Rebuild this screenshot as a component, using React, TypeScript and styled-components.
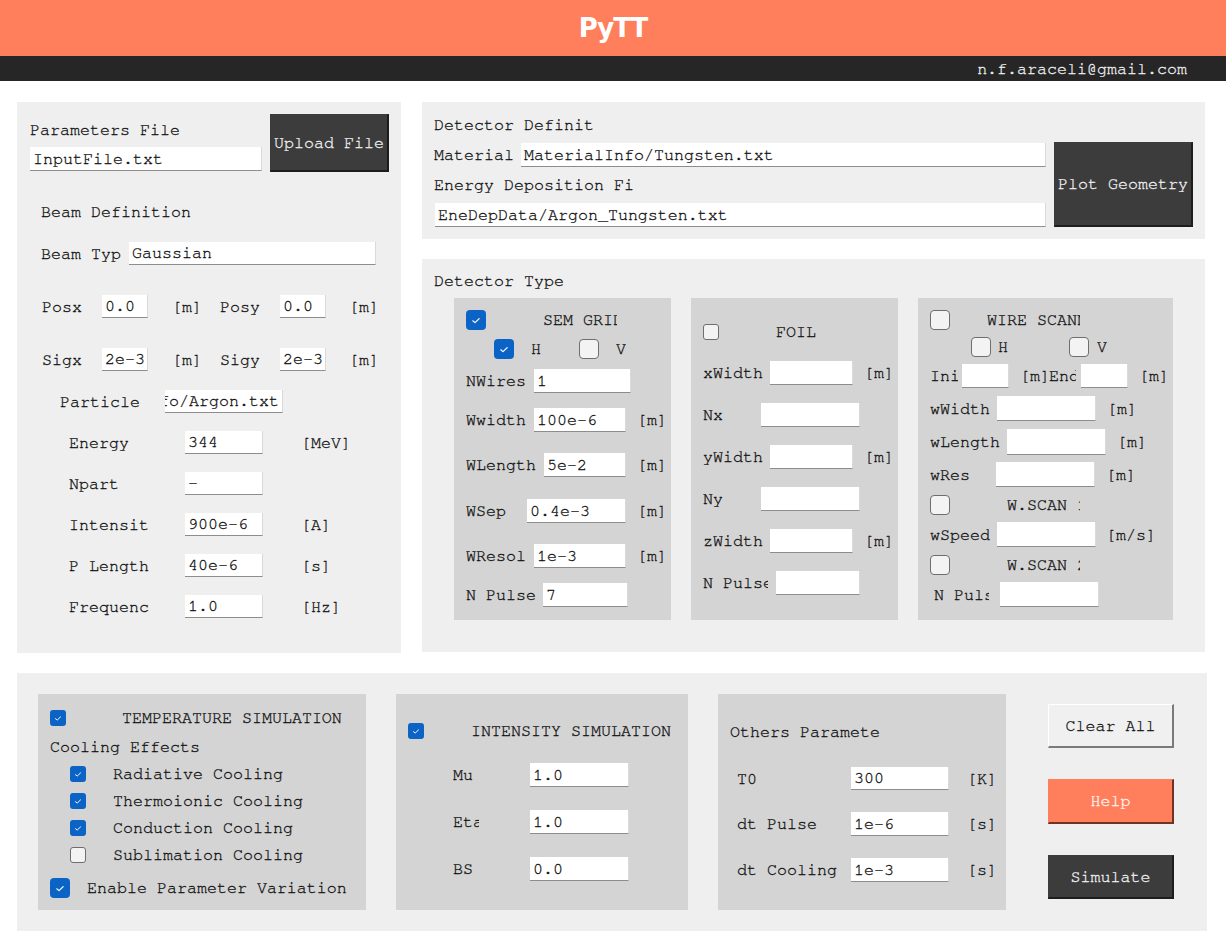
import React from "react";
import styled, { createGlobalStyle } from "styled-components";

const MONO = `"Nimbus Mono PS", "Nimbus Mono L", "FreeMono", "Courier 10 Pitch", "Liberation Mono", "Courier New", monospace`;

const GlobalStyle = createGlobalStyle`
  html, body { margin: 0; padding: 0; background: #ffffff; }
  body {
    font-family: ${MONO};
    font-size: 16.67px;
    color: #111111;
    -webkit-text-stroke: 0.3px currentColor;
  }
  * { box-sizing: border-box; }
`;

const Header = styled.header`
  height: 56px;
  background: #ff7f5c;
  display: flex;
  align-items: center;
  justify-content: center;
`;

const Title = styled.h1`
  margin: 0;
  font-family: "DejaVu Sans", "Liberation Sans", sans-serif;
  font-weight: bold;
  font-size: 26px;
  letter-spacing: -1px;
  color: #ffffff;
  line-height: 1;
  -webkit-text-stroke: 0;
`;

const SubBar = styled.div`
  height: 25px;
  background: #262626;
  display: flex;
  align-items: center;
  justify-content: flex-end;
  padding-right: 39px;
  color: #f0f0f0;
`;

const Main = styled.main`
  padding: 21px 0 19px 17px;
`;

const TopArea = styled.div`
  display: flex;
  gap: 21px;
  align-items: flex-start;
`;

const Panel = styled.section<{ $w: number; $h: number; $pt?: number; $pl?: number }>`
  width: ${(p) => p.$w}px;
  height: ${(p) => p.$h}px;
  background: #efefef;
  padding-top: ${(p) => p.$pt ?? 0}px;
  padding-left: ${(p) => p.$pl ?? 0}px;
  display: flex;
  flex-direction: column;
`;

const RightCol = styled.div`
  width: 783px;
  display: flex;
  flex-direction: column;
  gap: 20px;
`;

const Row = styled.div<{ $mt?: number; $h?: number; $pl?: number; $top?: boolean }>`
  display: flex;
  align-items: ${(p) => (p.$top ? "flex-start" : "center")};
  flex: none;
  margin-top: ${(p) => p.$mt ?? 0}px;
  height: ${(p) => p.$h ?? 24}px;
  padding-left: ${(p) => p.$pl ?? 0}px;
`;

const Text = styled.span<{ $w?: number; $ml?: number; $mt?: number }>`
  display: inline-block;
  flex: none;
  white-space: nowrap;
  overflow: hidden;
  line-height: 20px;
  ${(p) => (p.$w !== undefined ? `width: ${p.$w}px;` : "")}
  margin-left: ${(p) => p.$ml ?? 0}px;
  margin-top: ${(p) => p.$mt ?? 0}px;
`;

const Field = styled.div<{ $w: number; $h?: number; $ml?: number; $mt?: number; $end?: boolean }>`
  flex: none;
  width: ${(p) => p.$w}px;
  height: ${(p) => p.$h ?? 24}px;
  margin-left: ${(p) => p.$ml ?? 0}px;
  margin-top: ${(p) => p.$mt ?? 0}px;
  background: #ffffff;
  border-bottom: 1px solid #8d8d8d;
  border-right: 1px solid #d9d9d9;
  padding: 0 3px;
  display: flex;
  align-items: center;
  justify-content: ${(p) => (p.$end ? "flex-end" : "flex-start")};
  overflow: hidden;
  white-space: nowrap;
  color: #111111;
`;

const Column = styled.div<{ $w: number }>`
  width: ${(p) => p.$w}px;
  display: flex;
  flex-direction: column;
  flex: none;
`;

const Button = styled.button<{ $variant: "dark" | "light" | "accent"; $w: number; $h: number; $ml?: number; $mt?: number }>`
  flex: none;
  width: ${(p) => p.$w}px;
  height: ${(p) => p.$h}px;
  margin-left: ${(p) => p.$ml ?? 0}px;
  margin-top: ${(p) => p.$mt ?? 0}px;
  padding: 0;
  font-family: ${MONO};
  font-size: 16.67px;
  -webkit-text-stroke: 0.3px currentColor;
  white-space: nowrap;
  cursor: pointer;
  border-style: solid;
  border-width: 1px 2px 2px 1px;
  ${(p) =>
    p.$variant === "dark"
      ? `background: #3c3c3c; color: #f2f2f2; border-color: #3c3c3c #1d1d1d #1d1d1d #3c3c3c;`
      : p.$variant === "accent"
      ? `background: #ff7f5c; color: #fff6f0; border-color: #ff7f5c #6e3322 #6e3322 #ff7f5c;`
      : `background: #f0f0f0; color: #111111; border-color: #ffffff #7a7a7a #7a7a7a #ffffff;`}
`;

const BoxRow = styled.div<{ $mt?: number; $ml?: number; $gap: number }>`
  display: flex;
  gap: ${(p) => p.$gap}px;
  margin-top: ${(p) => p.$mt ?? 0}px;
  margin-left: ${(p) => p.$ml ?? 0}px;
`;

const Box = styled.div<{ $w: number; $h: number }>`
  width: ${(p) => p.$w}px;
  height: ${(p) => p.$h}px;
  background: #d4d4d4;
  display: flex;
  flex-direction: column;
  flex: none;
  overflow: hidden;
`;

const CheckBox = styled.span<{ $on?: boolean; $size: number; $ml?: number }>`
  flex: none;
  width: ${(p) => p.$size}px;
  height: ${(p) => p.$size}px;
  margin-left: ${(p) => p.$ml ?? 0}px;
  border-radius: ${(p) => (p.$size > 17 ? 4 : 3)}px;
  background: ${(p) => (p.$on ? "#0b63c5" : "#f3f3f3")};
  border: ${(p) => (p.$on ? "none" : "1px solid #6e6e6e")};
  display: flex;
  align-items: center;
  justify-content: center;
`;

const Check: React.FC<{ on?: boolean; size?: number; ml?: number }> = ({ on, size = 20, ml }) => (
  <CheckBox $on={on} $size={size} $ml={ml}>
    {on && (
      <svg width={size * 0.5} height={size * 0.5} viewBox="0 0 10 10">
        <polyline points="1.8,5.8 4,7.6 8.2,3.6" fill="none" stroke="#ffffff" strokeWidth="1.2" strokeLinecap="round" strokeLinejoin="round" />
      </svg>
    )}
  </CheckBox>
);

const BottomPanel = styled.section`
  width: 1190px;
  height: 258px;
  margin-top: 20px;
  background: #efefef;
  padding: 21px;
  display: flex;
  align-items: flex-start;
`;

const ButtonCol = styled.div<{ $ml: number }>`
  display: flex;
  flex-direction: column;
  margin-left: ${(p) => p.$ml}px;
`;

const LeftPanel = () => (
  <Panel $w={384} $h={551}>
    <Row $mt={12} $h={58} $pl={13} $top>
      <Column $w={232}>
        <Text $mt={6}>Parameters File</Text>
        <Field $w={232} $mt={7}>InputFile.txt</Field>
      </Column>
      <Button $variant="dark" $w={119} $h={58} $ml={8}>Upload File</Button>
    </Row>
    <Row $mt={30} $h={20} $pl={24}>
      <Text>Beam Definition</Text>
    </Row>
    <Row $mt={20} $h={23} $pl={24}>
      <Text $w={88}>Beam Typ</Text>
      <Field $w={247} $h={23}>Gaussian</Field>
    </Row>
    <Row $mt={30} $h={23} $pl={25}>
      <Text $w={60}>Posx</Text>
      <Field $w={46} $h={23}>0.0</Field>
      <Text $ml={24} $w={48}>[m]</Text>
      <Text $w={60}>Posy</Text>
      <Field $w={46} $h={23}>0.0</Field>
      <Text $ml={23}>[m]</Text>
    </Row>
    <Row $mt={30} $h={23} $pl={25}>
      <Text $w={60}>Sigx</Text>
      <Field $w={46} $h={23}>2e-3</Field>
      <Text $ml={24} $w={48}>[m]</Text>
      <Text $w={60}>Sigy</Text>
      <Field $w={46} $h={23}>2e-3</Field>
      <Text $ml={23}>[m]</Text>
    </Row>
    <Row $mt={19} $h={23} $pl={43}>
      <Text $w={105}>Particle</Text>
      <Field $w={118} $h={23} $end>ParticleInfo/Argon.txt</Field>
    </Row>
    {[
      ["Energy", "344", "[MeV]"],
      ["Npart", "-", ""],
      ["Intensit", "900e-6", "[A]"],
      ["P Length", "40e-6", "[s]"],
      ["Frequenc", "1.0", "[Hz]"],
    ].map(([l, v, u]) => (
      <Row key={l} $mt={18} $h={23} $pl={52}>
        <Text $w={116}>{l}</Text>
        <Field $w={78} $h={23}>{v}</Field>
        {u && <Text $ml={38}>{u}</Text>}
      </Row>
    ))}
  </Panel>
);

const DetectorDefinition = () => (
  <Panel $w={783} $h={137} $pt={13} $pl={12}>
    <Row $h={20}>
      <Text>Detector Definit</Text>
    </Row>
    <Row $mt={7} $h={85} $top>
      <Column $w={612}>
        <Row $mt={1} $h={24}>
          <Text $w={87}>Material</Text>
          <Field $w={525}>MaterialInfo/Tungsten.txt</Field>
        </Row>
        <Row $mt={8} $h={20}>
          <Text>Energy Deposition Fi</Text>
        </Row>
        <Row $mt={8} $h={24}>
          <Field $w={611} $ml={1}>EneDepData/Argon_Tungsten.txt</Field>
        </Row>
      </Column>
      <Button $variant="dark" $w={139} $h={85} $ml={8}>Plot Geometry</Button>
    </Row>
  </Panel>
);

const SemGrid = () => (
  <Box $w={217} $h={322}>
    <Row $mt={12} $h={20} $pl={12}>
      <Check on />
      <Text $ml={57} $w={74}>SEM GRID</Text>
    </Row>
    <Row $mt={9} $h={20} $pl={40}>
      <Check on />
      <Text $ml={17} $w={48}>H</Text>
      <Check />
      <Text $ml={17}>V</Text>
    </Row>
    <Row $mt={10} $pl={12}>
      <Text $w={68}>NWires</Text>
      <Field $w={97}>1</Field>
    </Row>
    <Row $mt={15} $pl={12}>
      <Text $w={68}>Wwidth</Text>
      <Field $w={92}>100e-6</Field>
      <Text $ml={11}>[m]</Text>
    </Row>
    <Row $mt={21} $pl={12}>
      <Text $w={78}>WLength</Text>
      <Field $w={82}>5e-2</Field>
      <Text $ml={11}>[m]</Text>
    </Row>
    <Row $mt={22} $pl={12}>
      <Text $w={61}>WSep</Text>
      <Field $w={99}>0.4e-3</Field>
      <Text $ml={11}>[m]</Text>
    </Row>
    <Row $mt={21} $pl={12}>
      <Text $w={68}>WResol</Text>
      <Field $w={92}>1e-3</Field>
      <Text $ml={11}>[m]</Text>
    </Row>
    <Row $mt={15} $pl={12}>
      <Text $w={77}>N Pulse</Text>
      <Field $w={85}>7</Field>
    </Row>
  </Box>
);

const Foil = () => (
  <Box $w={207} $h={322}>
    <Row $mt={26} $h={16} $pl={12}>
      <Check size={16} />
      <Text $ml={57}>FOIL</Text>
    </Row>
    {[
      ["xWidth", true],
      ["Nx", false],
      ["yWidth", true],
      ["Ny", false],
      ["zWidth", true],
    ].map(([l, unit], i) => (
      <Row key={l as string} $mt={i === 0 ? 21 : 18} $pl={12}>
        <Text $w={unit ? 67 : 58}>{l as string}</Text>
        <Field $w={unit ? 83 : 99}></Field>
        {unit && <Text $ml={11}>[m]</Text>}
      </Row>
    ))}
    <Row $mt={18} $pl={12}>
      <Text $w={65}>N Pulse</Text>
      <Field $w={84} $ml={8}></Field>
    </Row>
  </Box>
);

const WireScan = () => (
  <Box $w={255} $h={322}>
    <Row $mt={12} $h={20} $pl={12}>
      <Check />
      <Text $ml={37} $w={93}>WIRE SCANNER</Text>
    </Row>
    <Row $mt={7} $h={20} $pl={53}>
      <Check />
      <Text $ml={7} $w={71}>H</Text>
      <Check />
      <Text $ml={8}>V</Text>
    </Row>
    <Row $mt={7} $pl={12}>
      <Text $w={28}>Initial</Text>
      <Field $w={47} $ml={4}></Field>
      <Text $ml={11} $w={29}>[m]</Text>
      <Text $w={27}>End</Text>
      <Field $w={47} $ml={5}></Field>
      <Text $ml={11}>[m]</Text>
    </Row>
    <Row $mt={8} $h={25} $pl={12}>
      <Text $w={67}>wWidth</Text>
      <Field $w={99} $h={25}></Field>
      <Text $ml={11}>[m]</Text>
    </Row>
    <Row $mt={8} $h={26} $pl={12}>
      <Text $w={77}>wLength</Text>
      <Field $w={99} $h={26}></Field>
      <Text $ml={11}>[m]</Text>
    </Row>
    <Row $mt={7} $h={25} $pl={12}>
      <Text $w={66}>wRes</Text>
      <Field $w={99} $h={25}></Field>
      <Text $ml={11}>[m]</Text>
    </Row>
    <Row $mt={8} $h={20} $pl={12}>
      <Check />
      <Text $ml={57} $w={73}>W.SCAN 1</Text>
    </Row>
    <Row $mt={7} $h={25} $pl={12}>
      <Text $w={67}>wSpeed</Text>
      <Field $w={99} $h={25}></Field>
      <Text $ml={10}>[m/s]</Text>
    </Row>
    <Row $mt={8} $h={20} $pl={12}>
      <Check />
      <Text $ml={57} $w={73}>W.SCAN 2</Text>
    </Row>
    <Row $mt={7} $h={25} $pl={16}>
      <Text $w={55}>N Pulse</Text>
      <Field $w={99} $h={25} $ml={11}></Field>
    </Row>
  </Box>
);

const DetectorType = () => (
  <Panel $w={783} $h={393} $pt={12} $pl={12}>
    <Row $h={20}>
      <Text>Detector Type</Text>
    </Row>
    <BoxRow $mt={7} $ml={20} $gap={20}>
      <SemGrid />
      <Foil />
      <WireScan />
    </BoxRow>
  </Panel>
);

const TemperatureBox = () => (
  <Box $w={328} $h={216}>
    <Row $mt={16} $h={16} $pl={12}>
      <Check on size={16} />
      <Text $ml={56}>TEMPERATURE SIMULATION</Text>
    </Row>
    <Row $mt={11} $h={20} $pl={12}>
      <Text>Cooling Effects</Text>
    </Row>
    {[
      ["Radiative Cooling", true],
      ["Thermoionic Cooling", true],
      ["Conduction Cooling", true],
      ["Sublimation Cooling", false],
    ].map(([l, on], i) => (
      <Row key={l as string} $mt={i === 0 ? 9 : 11} $h={16} $pl={32}>
        <Check on={on as boolean} size={16} />
        <Text $ml={27}>{l as string}</Text>
      </Row>
    ))}
    <Row $mt={15} $h={20} $pl={12}>
      <Check on />
      <Text $ml={17}>Enable Parameter Variation</Text>
    </Row>
  </Box>
);

const IntensityBox = () => (
  <Box $w={292} $h={216}>
    <Row $mt={29} $h={16} $pl={12}>
      <Check on size={16} />
      <Text $ml={47}>INTENSITY SIMULATION</Text>
    </Row>
    <Row $mt={24} $pl={57}>
      <Text $w={26}>Mu</Text>
      <Field $w={99} $ml={51}>1.0</Field>
    </Row>
    <Row $mt={23} $pl={57}>
      <Text $w={26}>Eta</Text>
      <Field $w={99} $ml={51}>1.0</Field>
    </Row>
    <Row $mt={23} $pl={57}>
      <Text $w={26}>BS</Text>
      <Field $w={99} $ml={51}>0.0</Field>
    </Row>
  </Box>
);

const OthersBox = () => (
  <Box $w={288} $h={216}>
    <Row $mt={28} $h={20} $pl={12}>
      <Text>Others Paramete</Text>
    </Row>
    {[
      ["T0", "300", "[K]", 25, 23],
      ["dt Pulse", "1e-6", "[s]", 22, 24],
      ["dt Cooling", "1e-3", "[s]", 22, 24],
    ].map(([l, v, u, mt, h]) => (
      <Row key={l as string} $mt={mt as number} $h={h as number} $pl={19}>
        <Text $w={114}>{l as string}</Text>
        <Field $w={98} $h={h as number}>{v as string}</Field>
        <Text $ml={18} $w={27}>{u as string}</Text>
      </Row>
    ))}
  </Box>
);

export default function App() {
  return (
    <>
      <GlobalStyle />
      <Header>
        <Title>PyTT</Title>
      </Header>
      <SubBar>n.f.araceli@gmail.com</SubBar>
      <Main>
        <TopArea>
          <LeftPanel />
          <RightCol>
            <DetectorDefinition />
            <DetectorType />
          </RightCol>
        </TopArea>
        <BottomPanel>
          <TemperatureBox />
          <BoxRow $ml={30} $gap={30}>
            <IntensityBox />
            <OthersBox />
          </BoxRow>
          <ButtonCol $ml={42}>
            <Button $variant="light" $w={126} $h={44} $mt={10}>Clear All</Button>
            <Button $variant="accent" $w={126} $h={45} $mt={31}>Help</Button>
            <Button $variant="dark" $w={126} $h={44} $mt={31}>Simulate</Button>
          </ButtonCol>
        </BottomPanel>
      </Main>
    </>
  );
}
